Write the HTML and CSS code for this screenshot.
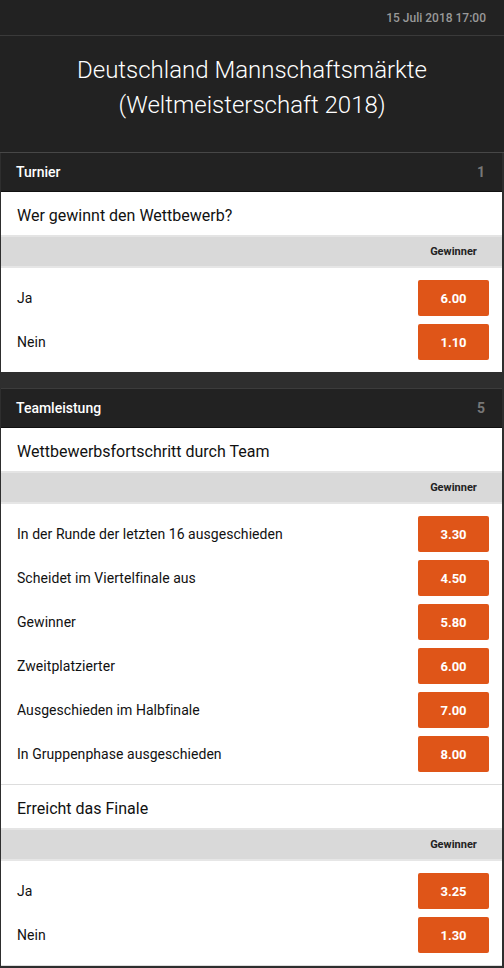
FILE: index.html
```html
<!DOCTYPE html>
<html lang="de">
<head>
<meta charset="utf-8">
<link rel="stylesheet" href="styles.css">
</head>
<body>
<div class="page">
  <div class="topbar"><span class="date">15 Juli 2018 17:00</span></div>
  <div class="title">Deutschland Mannschaftsmärkte<br>(Weltmeisterschaft 2018)</div>
  <div class="cards">
    <section class="card">
      <div class="card-head"><span class="card-name">Turnier</span><span class="card-count">1</span></div>
      <div class="market last">
        <div class="market-q">Wer gewinnt den Wettbewerb?</div>
        <div class="market-band"><span class="band-label">Gewinner</span></div>
        <div class="rows">
          <div class="row"><span class="row-label">Ja</span><button class="odd">6.00</button></div>
          <div class="row"><span class="row-label">Nein</span><button class="odd">1.10</button></div>
        </div>
      </div>
    </section>
    <section class="card">
      <div class="card-head"><span class="card-name">Teamleistung</span><span class="card-count">5</span></div>
      <div class="market">
        <div class="market-q">Wettbewerbsfortschritt durch Team</div>
        <div class="market-band"><span class="band-label">Gewinner</span></div>
        <div class="rows">
          <div class="row"><span class="row-label">In der Runde der letzten 16 ausgeschieden</span><button class="odd">3.30</button></div>
          <div class="row"><span class="row-label">Scheidet im Viertelfinale aus</span><button class="odd">4.50</button></div>
          <div class="row"><span class="row-label">Gewinner</span><button class="odd">5.80</button></div>
          <div class="row"><span class="row-label">Zweitplatzierter</span><button class="odd">6.00</button></div>
          <div class="row"><span class="row-label">Ausgeschieden im Halbfinale</span><button class="odd">7.00</button></div>
          <div class="row"><span class="row-label">In Gruppenphase ausgeschieden</span><button class="odd">8.00</button></div>
        </div>
      </div>
      <div class="market">
        <div class="market-q">Erreicht das Finale</div>
        <div class="market-band"><span class="band-label">Gewinner</span></div>
        <div class="rows">
          <div class="row"><span class="row-label">Ja</span><button class="odd">3.25</button></div>
          <div class="row"><span class="row-label">Nein</span><button class="odd">1.30</button></div>
        </div>
      </div>
    </section>
  </div>
</div>
</body>
</html>
```
FILE: styles.css
```css
html, body {
  margin: 0;
  padding: 0;
  background: #2e2e2e;
}
body {
  font-family: Roboto, "Liberation Sans", Arial, sans-serif;
  width: 504px;
  min-height: 968px;
}
.page {
  display: flex;
  flex-direction: column;
}
.topbar {
  height: 35px;
  background: #222;
  border-bottom: 1px solid #3a3a3a;
  display: flex;
  align-items: center;
  justify-content: flex-end;
  padding-right: 18px;
}
.date {
  color: #999;
  font-size: 12px;
  font-weight: 500;
}
.title {
  background: #222;
  color: #fff;
  text-align: center;
  font-size: 24px;
  font-weight: 300;
  line-height: 35px;
  padding: 17px 0 29px;
  border-bottom: 1px solid #474747;
}
.cards {
  display: flex;
  flex-direction: column;
  gap: 16px;
  padding: 0 2px 0 1px;
}
.card {
  background: #fff;
}
.card-head {
  background: #222;
  height: 38px;
  border-bottom: 1px solid #111;
  display: flex;
  align-items: center;
  justify-content: space-between;
  padding: 0 17px 0 15px;
}
.card + .card .card-head {
  border-top: 1px solid #3c3c3c;
}
.card-name {
  color: #fff;
  font-size: 14px;
  font-weight: 500;
}
.card-count {
  color: #777;
  font-size: 14px;
  font-weight: 700;
}
.market {
  border-bottom: 1px solid #ddd;
}
.market.last {
  border-bottom: none;
}
.market-q {
  height: 39px;
  padding-top: 4px;
  display: flex;
  align-items: center;
  padding-left: 16px;
  font-size: 16px;
  color: #111;
}
.market-band {
  height: 29px;
  background: #d9d9d9;
  border-top: 2px solid #e4e4e4;
  border-bottom: 2px solid #e6e6e6;
  display: flex;
  align-items: center;
  justify-content: flex-end;
  padding-right: 13px;
}
.band-label {
  width: 71px;
  text-align: center;
  font-size: 11px;
  font-weight: 700;
  color: #222;
}
.rows {
  display: flex;
  flex-direction: column;
  gap: 8px;
  padding: 12px 13px 12px 16px;
}
.row {
  display: flex;
  align-items: center;
  justify-content: space-between;
  height: 36px;
}
.row-label {
  font-size: 14px;
  color: #111;
  letter-spacing: 0.05px;
}
.odd {
  width: 71px;
  height: 36px;
  border: none;
  border-radius: 2px;
  background: #df5518;
  color: #fff;
  font-family: Roboto, "Liberation Sans", Arial, sans-serif;
  font-size: 13px;
  font-weight: 700;
  padding: 0;
}
```
